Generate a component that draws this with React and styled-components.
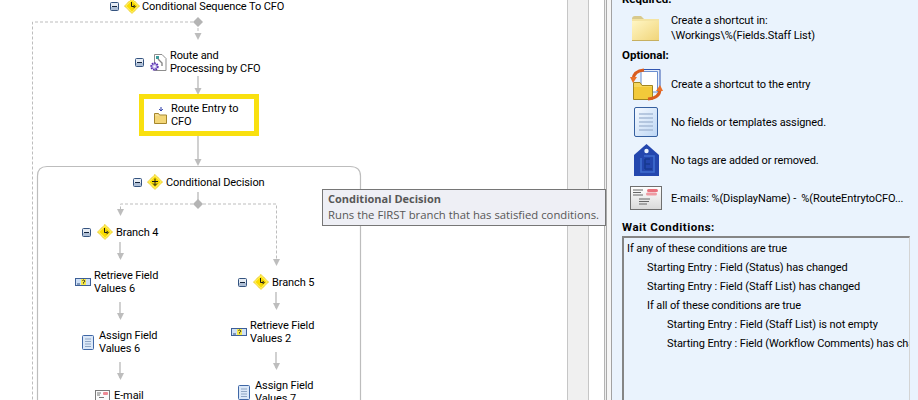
import React from 'react';
import styled, { createGlobalStyle } from 'styled-components';

const GlobalStyle = createGlobalStyle`
  html, body {
    margin: 0;
    padding: 0;
    background: #fff;
    overflow: hidden;
  }
  body {
    font-family: Roboto, "Liberation Sans", Arial, sans-serif;
    font-size: 11px;
    letter-spacing: -0.1px;
    color: #000;
  }
`;

const Window = styled.div`
  display: flex;
  width: 918px;
  height: 400px;
  overflow: hidden;
  position: relative;
`;

const Canvas = styled.div`
  position: relative;
  flex: 0 0 567px;
  height: 100%;
  background: #fff;
  overflow: hidden;
`;

const Wires = styled.svg`
  position: absolute;
  left: 0;
  top: 0;
`;

const Strip = styled.div`
  flex: 0 0 ${(p) => p.$width}px;
  box-sizing: border-box;
  border-left: 1px solid #c6c6c6;
  background: ${(p) => p.$bg};
`;

const Sash = styled.div`
  flex: 0 0 8px;
  box-sizing: border-box;
  border-left: 1px solid #b4b4b4;
  border-right: 1px solid #a2a2a2;
  background: linear-gradient(to right, #eee 0, #eee 1px, #aaa 1px, #aaa 2px, #f6f6f6 2px);
`;

const Panel = styled.div`
  flex: 1;
  min-width: 0;
  display: flex;
  flex-direction: column;
  background: #eaf3fd;
  padding-left: 10px;
  height: 100%;
  overflow: hidden;
`;

const SectionTitle = styled.div`
  font-weight: bold;
  font-size: 11.5px;
  letter-spacing: ${(p) => p.$spacing ?? 0}px;
  line-height: 14px;
  height: 14px;
  margin-top: ${(p) => p.$top}px;
  white-space: nowrap;
`;

const InfoRow = styled.div`
  display: flex;
  align-items: center;
  height: ${(p) => p.$height}px;
  margin-top: ${(p) => p.$top || 0}px;
`;

const InfoIcon = styled.div`
  flex: 0 0 49px;
  display: flex;
  justify-content: center;
  padding-right: 1px;
  box-sizing: border-box;
`;

const InfoText = styled.div`
  line-height: 15px;
  white-space: pre;
`;

const ConditionList = styled.div`
  flex: 1;
  margin: 2px 8px 0 0;
  box-sizing: border-box;
  border-style: solid;
  border-width: 2px 1px 0 2px;
  border-color: #858585 #d4d4d4 #d4d4d4 #858585;
  padding: 1px 0 0 3px;
  overflow: hidden;
  background: #eaf3fd;
`;

const Condition = styled.div`
  height: 19px;
  line-height: 19px;
  padding-left: ${(p) => p.$level * 20}px;
  white-space: nowrap;
`;

const Tooltip = styled.div`
  position: absolute;
  left: 322px;
  top: 189px;
  width: 284px;
  height: 37px;
  box-sizing: border-box;
  border: 1px solid #767676;
  background: #eeeff5;
  color: #575757;
  padding: 1px 5px;
  font-family: "Open Sans", "Noto Sans", sans-serif;
  font-size: 11.3px;
  letter-spacing: 0;
  line-height: 16px;
  white-space: nowrap;
`;

const TooltipTitle = styled.div`
  font-weight: bold;
  font-size: 11px;
`;

const Node = styled.div`
  position: absolute;
  left: ${(p) => p.$x}px;
  top: ${(p) => p.$y}px;
  display: flex;
  align-items: center;
  gap: ${(p) => p.$gap ?? 3}px;
`;

const Label = styled.div`
  line-height: 13px;
  white-space: nowrap;
`;

const Highlight = styled.div`
  position: absolute;
  left: 139px;
  top: 94px;
  width: 120px;
  height: 42px;
  box-sizing: border-box;
  border: 5px solid #f9e00f;
  background: #fff;
  display: flex;
  align-items: center;
  gap: 4px;
  padding-left: 10px;
`;

const ExpanderBox = styled.svg`
  flex: none;
  margin-right: ${(p) => p.$after}px;
`;

function Expander({ after = 3 }) {
  return (
    <ExpanderBox $after={after} width="9" height="9" viewBox="0 0 9 9">
      <rect x="0.5" y="0.5" width="8" height="8" rx="1" fill="#e6ecf4" stroke="#34537f" />
      <rect x="1" y="5" width="7" height="3" fill="#aebfd6" />
      <rect x="2" y="4" width="5" height="1" fill="#14243c" />
    </ExpanderBox>
  );
}

function Diamond({ kind }) {
  return (
    <svg width="16" height="16" viewBox="0 0 16 16" style={{ flex: 'none' }}>
      <path d="M8 .5 15.500 8 8 15.500 .5 8Z" fill="#ffee62" stroke="#e6c200" strokeDasharray="1.200 .6" />
      <path d="M8 2.500 13.500 8 8 13.500 2.500 8Z" fill="#fbdc00" />
      {kind === 'split' ? (
        <path d="M8 4.500V11.500M6 9.500l2 2 2-2M5 7.500h6" fill="none" stroke="#1b1b1b" />
      ) : (
        <path d="M7.500 4V8.500H10.500M9.500 6.800 11.200 8.500 9.500 10.200" fill="none" stroke="#1b1b1b" />
      )}
    </svg>
  );
}

function RouteIcon() {
  return (
    <svg width="17" height="17" viewBox="0 0 17 17" style={{ flex: 'none' }}>
      <path d="M4.500 .5H12L16 4.500V16.500H4.500Z" fill="#fff" stroke="#8d8d8d" />
      <rect x="6" y="2" width="3" height="3" fill="#3c9c9c" />
      <path d="M8 5l4 4v3" fill="none" stroke="#888" strokeWidth="1.400" />
      <circle cx="4.500" cy="12.500" r="3.200" fill="#c9c3ee" stroke="#5a2fb0" strokeWidth="2" strokeDasharray="1.600 .8" />
      <circle cx="4.500" cy="12.500" r="1.100" fill="#fff" />
    </svg>
  );
}

function SmallFolder() {
  return (
    <svg width="13" height="17" viewBox="0 0 13 17" style={{ flex: 'none' }}>
      <path d="M7 0V3M5.200 2 7 4 8.800 2" fill="none" stroke="#2838a8" />
      <path d="M.5 6.500h4l1 1.500h7v8.500H.5Z" fill="#f5de90" stroke="#a5862c" />
      <rect x="1" y="9" width="11" height="7" fill="#f3d678" />
    </svg>
  );
}

function RetrieveIcon() {
  return (
    <svg width="16" height="8" viewBox="0 0 16 8" style={{ flex: 'none' }}>
      <rect x=".5" y=".5" width="15" height="7" fill="#cfe0f6" stroke="#3d5f96" />
      <rect x="6" y="1" width="5" height="6" fill="#f6e94a" />
      <path d="M7.500 2.500q1-1 2 0t-1 2v1" fill="none" stroke="#222" />
      <path d="M2 6H5" stroke="#33507f" />
    </svg>
  );
}

function FormIcon() {
  return (
    <svg width="12" height="15" viewBox="0 0 12 15" style={{ flex: 'none' }}>
      <rect x=".5" y=".5" width="11" height="14" rx="1" fill="#dbe8f8" stroke="#3f67a6" />
      <path d="M3 4H9M3 6.500H9M3 9H9M3 11.500H9" stroke="#8fa6c4" />
    </svg>
  );
}

function MailIcon() {
  return (
    <svg width="15" height="11" viewBox="0 0 15 11" style={{ flex: 'none' }}>
      <rect x=".5" y=".5" width="14" height="10" fill="#fbfbfb" stroke="#7a7a7a" />
      <path d="M2 3H6M2 5H5M4 7.500H9" stroke="#777" />
      <rect x="8" y="2" width="5" height="3" rx="1" fill="#ee8a94" />
    </svg>
  );
}

function BigFolder() {
  return (
    <svg width="28" height="25" viewBox="0 0 28 25">
      <defs>
        <linearGradient id="bf" x1="0" y1="0" x2="1" y2="1">
          <stop offset="0" stopColor="#fff6c4" />
          <stop offset="1" stopColor="#f0d478" />
        </linearGradient>
      </defs>
      <path d="M0 3Q0 0 3 0H9L12 3H0Z" fill="#d8c98c" />
      <rect x="0" y="3" width="27" height="22" fill="#f4e4a2" />
      <rect x="0" y="5" width="27" height="20" fill="url(#bf)" />
      <path d="M0 24.500H27" stroke="#c7b060" />
    </svg>
  );
}

function ShortcutIcon() {
  return (
    <svg width="33" height="33" viewBox="0 0 33 33">
      <path d="M13 1.500H30V23H13Z" fill="#e6eefb" stroke="#3256b0" />
      <path d="M11 3.500H27.500V24H11Z" fill="#fff" stroke="#6a8ed0" />
      <path d="M3.500 14.500H10L12 17.500H22.500V31.500H3.500Z" fill="#f6d65c" stroke="#a08420" />
      <path d="M4 19H22V31H4Z" fill="#f2c93a" />
      <path d="M3 11Q4 3 14 2" fill="none" stroke="#d95c1e" strokeWidth="3" />
      <path d="M0 9H7L3 15Z" fill="#e9702a" />
      <path d="M30 21Q30 30 18 31" fill="none" stroke="#d95c1e" strokeWidth="3" />
      <path d="M26 23H33L30 17Z" fill="#e9702a" />
    </svg>
  );
}

function BigForm() {
  return (
    <svg width="24" height="30" viewBox="0 0 24 30">
      <defs>
        <linearGradient id="fm" x1="0" y1="0" x2="1" y2="1">
          <stop offset="0" stopColor="#f6faff" />
          <stop offset="1" stopColor="#bdd6f4" />
        </linearGradient>
      </defs>
      <rect x=".5" y=".5" width="23" height="29" rx="1.500" fill="url(#fm)" stroke="#355f9f" />
      <path d="M5 7H19M5 11H19M5 15H19M5 19H19M5 23H19" stroke="#a6bbd6" strokeWidth="1.400" />
    </svg>
  );
}

function TagIcon() {
  return (
    <svg width="25" height="32" viewBox="0 0 25 32">
      <path d="M12.500 0 25 11V32H0V11Z" fill="#2447ae" />
      <circle cx="12.500" cy="7" r="2.200" fill="#eaf3fd" />
      <path d="M10 12H20V28H7V14" fill="none" stroke="#3f6ed0" strokeWidth="1.600" />
      <path d="M11 15H16M11 20H16M11 25H18M11 15V25" fill="none" stroke="#173a90" strokeWidth="1.600" />
    </svg>
  );
}

function MailCard() {
  return (
    <svg width="32" height="24" viewBox="0 0 32 24">
      <defs>
        <linearGradient id="mc" x1="0" y1="0" x2="0" y2="1">
          <stop offset="0" stopColor="#fff" />
          <stop offset="1" stopColor="#d9d9d9" />
        </linearGradient>
      </defs>
      <rect x=".5" y=".5" width="31" height="23" fill="url(#mc)" stroke="#6f6f6f" />
      <path d="M3 4H13M3 6.500H11M3 9H13M9 13H20M9 15.500H19M9 18H17" stroke="#666" />
      <rect x="17" y="3" width="11" height="3" rx="1.500" fill="#e9717c" />
      <rect x="16" y="6.500" width="11" height="3" rx="1.500" fill="#ef9aa2" />
    </svg>
  );
}

const solidWires = [
  'M198 76V92', 'M198 136V163', 'M198 192V200',
  'M120 242V258', 'M120 302V318', 'M120 362V378',
  'M276 292V308', 'M276 352V368',
];

const dashedWires = [
  'M198 22H32.500V400', 'M198 28V36', 'M198 204H120.500V214', 'M198 204H276.500V264',
];

const arrowTips = [
  [198, 40], [198, 95], [198, 166], [120.5, 216], [276.5, 266],
  [120.5, 260], [120.5, 320], [120.5, 380], [276.5, 310], [276.5, 370],
];

const conditions = [
  [0, 'If any of these conditions are true'],
  [1, 'Starting Entry : Field (Status) has changed'],
  [1, 'Starting Entry : Field (Staff List) has changed'],
  [1, 'If all of these conditions are true'],
  [2, 'Starting Entry : Field (Staff List) is not empty'],
  [2, 'Starting Entry : Field (Workflow Comments) has changed'],
];

export default function App() {
  return (
    <Window>
      <GlobalStyle />
      <Canvas>
        <Wires width="567" height="400">
          <path d="M37.500 400V176Q37.500 166.500 47 166.500H350Q360.500 166.500 360.500 176V400" fill="none" stroke="#bdbdbd" strokeWidth="1.200" />
          {solidWires.map((d) => (
            <path key={d} d={d} fill="none" stroke="#bdbdbd" strokeWidth="1.400" />
          ))}
          {dashedWires.map((d) => (
            <path key={d} d={d} fill="none" stroke="#bdbdbd" strokeDasharray="3 2" />
          ))}
          {arrowTips.map(([x, y]) => (
            <path key={`${x}-${y}`} d={`M${x} ${y}l-3.500 -7h7Z`} fill="#bdbdbd" />
          ))}
          <path d="M198 17l5 5-5 5-5-5Z" fill="#b4b4b4" />
          <path d="M198 199l5 5-5 5-5-5Z" fill="#b4b4b4" />
        </Wires>

        <Node $x={110} $y={-2} $gap={2}>
          <Expander />
          <Diamond />
          <Label>Conditional Sequence To CFO</Label>
        </Node>
        <Node $x={135} $y={49}>
          <Expander />
          <RouteIcon />
          <Label>Route and<br />Processing by CFO</Label>
        </Node>

        <Highlight>
          <SmallFolder />
          <Label>Route Entry to<br />CFO</Label>
        </Highlight>

        <Node $x={133} $y={174}>
          <Expander after={2} />
          <Diamond kind="split" />
          <Label>Conditional Decision</Label>
        </Node>
        <Node $x={82} $y={224}>
          <Expander />
          <Diamond />
          <Label>Branch 4</Label>
        </Node>
        <Node $x={75} $y={269}>
          <RetrieveIcon />
          <Label>Retrieve Field<br />Values 6</Label>
        </Node>
        <Node $x={82} $y={329} $gap={5}>
          <FormIcon />
          <Label>Assign Field<br />Values 6</Label>
        </Node>
        <Node $x={95} $y={389} $gap={4}>
          <MailIcon />
          <Label>E-mail</Label>
        </Node>
        <Node $x={238} $y={274}>
          <Expander />
          <Diamond />
          <Label>Branch 5</Label>
        </Node>
        <Node $x={231} $y={319}>
          <RetrieveIcon />
          <Label>Retrieve Field<br />Values 2</Label>
        </Node>
        <Node $x={238} $y={379} $gap={5}>
          <FormIcon />
          <Label>Assign Field<br />Values 7</Label>
        </Node>
      </Canvas>

      <Strip $width={21} $bg="#f0f0f0" />
      <Strip $width={16} $bg="#fff" />
      <Sash />

      <Panel>
        <SectionTitle $top={-8}>Required:</SectionTitle>
        <InfoRow $height={30} $top={7}>
          <InfoIcon><BigFolder /></InfoIcon>
          <InfoText>Create a shortcut in:<br />\Workings\%(Fields.Staff List)</InfoText>
        </InfoRow>
        <SectionTitle $top={5}>Optional:</SectionTitle>
        <InfoRow $height={33} $top={6}>
          <InfoIcon><ShortcutIcon /></InfoIcon>
          <InfoText>Create a shortcut to the entry</InfoText>
        </InfoRow>
        <InfoRow $height={30} $top={6}>
          <InfoIcon><BigForm /></InfoIcon>
          <InfoText>No fields or templates assigned.</InfoText>
        </InfoRow>
        <InfoRow $height={32} $top={7}>
          <InfoIcon><TagIcon /></InfoIcon>
          <InfoText>No tags are added or removed.</InfoText>
        </InfoRow>
        <InfoRow $height={24} $top={10}>
          <InfoIcon><MailCard /></InfoIcon>
          <InfoText>E-mails: %(DisplayName) -  %(RouteEntrytoCFO...</InfoText>
        </InfoRow>
        <SectionTitle $top={10} $spacing={0.5}>Wait Conditions:</SectionTitle>
        <ConditionList>
          {conditions.map(([level, text]) => (
            <Condition key={text} $level={level}>{text}</Condition>
          ))}
        </ConditionList>
      </Panel>

      <Tooltip>
        <TooltipTitle>Conditional Decision</TooltipTitle>
        Runs the FIRST branch that has satisfied conditions.
      </Tooltip>
    </Window>
  );
}
